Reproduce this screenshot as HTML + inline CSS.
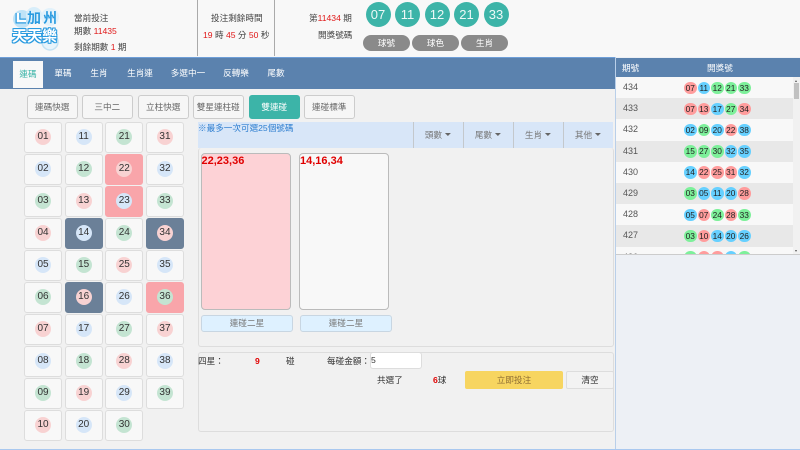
<!DOCTYPE html>
<html lang="zh-Hant"><head><meta charset="utf-8"><title>加州天天樂</title>
<style>
*{box-sizing:border-box;margin:0;padding:0}
html,body{width:800px;height:450px;overflow:hidden;background:#f1f1f1}
body{position:relative;font:8.6px/12px "Liberation Sans","Noto Sans CJK TC",sans-serif;color:#444}
.a{position:absolute;white-space:nowrap}
.red{color:#e01818}
.hdr{left:0;top:0;width:800px;height:57px;background:#f8f8f8}
.v{width:1px;height:56px;top:0;background:#aaa}
.b{width:25px;height:25px;top:1.5px;border-radius:50%;background:#3cb4a8;color:#eef9f7;font-size:13px;line-height:25px;text-align:center}
.p{top:35px;height:16px;width:47px;border-radius:8px;background:#8a8a8a;color:#fff;line-height:16px;text-align:center}
.nav{left:0;top:57px;width:615px;height:32px;background:#5b82ae;border-top:1px solid #6f9fd8}
.n{top:67px;color:#fff;transform:translateX(-50%)}
.btn{top:95px;height:24px;width:50.5px;border:1px solid #ccc;border-radius:3px;background:#f6f6f6;color:#666;text-align:center;line-height:22px}
#g{position:absolute;left:24px;top:121.5px;display:grid;grid-auto-flow:column;grid-template-rows:repeat(10,31px);grid-template-columns:repeat(4,38px);gap:1px 2.67px}
#g div{border:1px solid #ddd;border-radius:3px;background:#f8f8f8;display:flex;align-items:center;justify-content:center}
#g span{width:16px;height:16px;border-radius:50%;font-size:10px;line-height:16px;text-align:center;color:#333}
#g .s{background:#f9a5aa;border-color:#f9a5aa}
#g .d{background:#6b8098;border-color:#6b8098}
.r{background:#f8d2d2}.l{background:#d6e6f8}.g{background:#c4e4d2}
.strip{left:198px;top:121.5px;width:415px;height:26px;background:#d8e6f8}
.sep{top:121.5px;width:1px;height:26px;background:#c4c8cc}
.tb{top:128.5px;color:#777;transform:translateX(-50%)}
.tb:after{content:"";display:inline-block;margin-left:3px;border:3px solid transparent;border-top:3px solid #666;border-bottom:0;vertical-align:2px}
.panel{border:1px solid #ddd;border-radius:3px}
.card{top:153px;width:90px;height:157px;border:1px solid #bbb;border-radius:4px;padding:0;font:bold 11px/14px "Liberation Sans",sans-serif;color:#e00000}
.cb{top:315px;width:92px;height:17px;background:#def1ff;border:1px solid #c8d6e2;border-radius:3px;text-align:center;color:#777;line-height:15px}
.side{left:615px;top:57px;width:185px;height:393px;background:#edf0f5;border-left:1px solid #b9cfe9}
.sh{left:616px;top:58px;width:184px;height:19px;background:#5b82ae;color:#fff;line-height:20px}
.list{left:616px;top:77px;width:184px;height:178px;overflow:hidden;background:#f8f8f8;border-bottom:1px solid #ccc}
.row{height:21.2px;position:relative;line-height:21px;padding-left:7px;color:#555;font-size:9px}
.row:nth-child(even){background:#e8e8e8}
.row b{position:absolute;top:4.5px;width:12.5px;height:12.5px;border-radius:50%;font:8.3px/12.5px "Liberation Sans",sans-serif;text-align:center;color:#222}
.row b:nth-of-type(1){left:68px}.row b:nth-of-type(2){left:81.5px}.row b:nth-of-type(3){left:95px}.row b:nth-of-type(4){left:108.5px}.row b:nth-of-type(5){left:122px}
.x{background:#ff9c9c}.y{background:#66d0ff}.z{background:#7df09a}
.logo{font:bold 15px/15px "Liberation Sans","Noto Sans CJK TC",sans-serif;color:#fff;text-shadow:-1px 0 #2a9be0,1px 0 #2a9be0,0 -1px #2a9be0,0 1px #2a9be0,1px 1px #2a9be0,-1px -1px #2a9be0,1px -1px #2a9be0,-1px 1px #2a9be0}
</style></head><body>
<div class="a hdr"></div>
<svg class="a" style="left:8px;top:3px" width="54" height="52" viewBox="0 0 54 52"><circle cx="14" cy="16" r="9" fill="#bfe3f7"/><circle cx="26" cy="12" r="8" fill="#d8eefa"/><circle cx="42" cy="14" r="9" fill="#e2f2fb"/><circle cx="42" cy="39" r="8" fill="#e8f4fb" stroke="#c4e2f3" stroke-width="1.5"/><path d="M10 10v8h8" fill="none" stroke="#2a9be0" stroke-width="5"/><path d="M10 10v8h8" fill="none" stroke="#fff" stroke-width="2.5"/></svg>
<div class="a" style="left:27px;top:11px;font:bold 14px/15px 'Liberation Sans','Noto Sans CJK TC',sans-serif;letter-spacing:2px;color:#2a9be0;text-shadow:0 0 1px #fff">加州</div>
<div class="a logo" style="left:12px;top:29px">天天樂</div>
<div class="a" style="left:74px;top:12px">當前投注</div>
<div class="a" style="left:74px;top:25px">期數 <span class="red">11435</span></div>
<div class="a" style="left:74px;top:41px">剩餘期數 <span class="red">1</span> 期</div>
<div class="a v" style="left:197px"></div><div class="a v" style="left:274px"></div>
<div class="a" style="left:211px;top:12px">投注剩餘時間</div>
<div class="a" style="left:203px;top:29px"><span class="red">19</span> 時 <span class="red">45</span> 分 <span class="red">50</span> 秒</div>
<div class="a" style="left:309px;top:12px">第<span class="red">11434</span> 期</div>
<div class="a" style="left:318px;top:29px">開獎號碼</div>
<div class="a b" style="left:365.5px">07</div><div class="a b" style="left:395px">11</div><div class="a b" style="left:424.5px">12</div><div class="a b" style="left:454px">21</div><div class="a b" style="left:483.5px">33</div>
<div class="a p" style="left:363px">球號</div><div class="a p" style="left:412px">球色</div><div class="a p" style="left:461px">生肖</div>

<div class="a nav"></div>
<div class="a" style="left:13px;top:61px;width:30px;height:27px;background:#f8f8f8;color:#3cb4a8;text-align:center;line-height:27px">連碼</div>
<div class="a n" style="left:63px">單碼</div><div class="a n" style="left:99px">生肖</div><div class="a n" style="left:140px">生肖連</div><div class="a n" style="left:188px">多選中一</div><div class="a n" style="left:236px">反轉樂</div><div class="a n" style="left:276px">尾數</div>

<div class="a btn" style="left:27px">連碼快選</div><div class="a btn" style="left:82px">三中二</div><div class="a btn" style="left:138px">立柱快選</div><div class="a btn" style="left:193px">雙星連柱碰</div><div class="a btn" style="left:249px;background:#3cb4a8;border-color:#3cb4a8;color:#fff">雙連碰</div><div class="a btn" style="left:304px">連碰標準</div>

<div id="g">
<div><span class="r">01</span></div><div><span class="l">02</span></div><div><span class="g">03</span></div><div><span class="r">04</span></div><div><span class="l">05</span></div><div><span class="g">06</span></div><div><span class="r">07</span></div><div><span class="l">08</span></div><div><span class="g">09</span></div><div><span class="r">10</span></div>
<div><span class="l">11</span></div><div><span class="g">12</span></div><div><span class="r">13</span></div><div class="d"><span class="l">14</span></div><div><span class="g">15</span></div><div class="d"><span class="r">16</span></div><div><span class="l">17</span></div><div><span class="g">18</span></div><div><span class="r">19</span></div><div><span class="l">20</span></div>
<div><span class="g">21</span></div><div class="s"><span class="r">22</span></div><div class="s"><span class="l">23</span></div><div><span class="g">24</span></div><div><span class="r">25</span></div><div><span class="l">26</span></div><div><span class="g">27</span></div><div><span class="r">28</span></div><div><span class="l">29</span></div><div><span class="g">30</span></div>
<div><span class="r">31</span></div><div><span class="l">32</span></div><div><span class="g">33</span></div><div class="d"><span class="r">34</span></div><div><span class="l">35</span></div><div class="s"><span class="g">36</span></div><div><span class="r">37</span></div><div><span class="l">38</span></div><div><span class="g">39</span></div>
</div>

<div class="a strip"></div>
<div class="a" style="left:198px;top:122px;color:#2f7fd0">※最多一次可選25個號碼</div>
<div class="a sep" style="left:413px"></div><div class="a sep" style="left:463px"></div><div class="a sep" style="left:513px"></div><div class="a sep" style="left:563px"></div>
<div class="a tb" style="left:438px">頭數</div><div class="a tb" style="left:488px">尾數</div><div class="a tb" style="left:538px">生肖</div><div class="a tb" style="left:588px">其他</div>

<div class="a panel" style="left:198px;top:148px;width:416px;height:199px;border-top:0"></div>
<div class="a card" style="left:200.5px;background:#fdd2d6">22,23,36</div>
<div class="a card" style="left:299px;background:#f8f8f8">14,16,34</div>
<div class="a cb" style="left:201px">連碰二星</div><div class="a cb" style="left:300px">連碰二星</div>

<div class="a panel" style="left:198px;top:352px;width:416px;height:80px"></div>
<div class="a" style="left:198px;top:355px;color:#333">四星：</div>
<div class="a" style="left:255px;top:355px;color:#e00000;font-weight:bold">9</div>
<div class="a" style="left:286px;top:355px;color:#333">碰</div>
<div class="a" style="left:327px;top:355px;color:#333">每碰金額：</div>
<div class="a" style="left:370px;top:352px;width:52px;height:17px;background:#fff;border:1px solid #ddd;border-radius:3px;line-height:15px;color:#333">5</div>
<div class="a" style="left:377px;top:374px;color:#333">共選了</div>
<div class="a" style="left:433px;top:374px;color:#333"><span style="color:#e00000;font-weight:bold">6</span>球</div>
<div class="a" style="left:465px;top:371px;width:98px;height:18px;background:#f7d560;border-radius:2px;text-align:center;line-height:18px;color:#8f6f35">立即投注</div>
<div class="a" style="left:566px;top:371px;width:48px;height:18px;background:#f3f3f3;border:1px solid #ddd;border-radius:2px;text-align:center;line-height:16px;color:#333">清空</div>

<div class="a side"></div>
<div class="a sh"><span class="a" style="left:6px;top:0">期號</span><span class="a" style="left:91px;top:0">開獎號</span></div>
<div class="a list">
<div class="row">434<b class="x">07</b><b class="y">11</b><b class="z">12</b><b class="z">21</b><b class="z">33</b></div>
<div class="row">433<b class="x">07</b><b class="x">13</b><b class="y">17</b><b class="z">27</b><b class="x">34</b></div>
<div class="row">432<b class="y">02</b><b class="z">09</b><b class="y">20</b><b class="x">22</b><b class="y">38</b></div>
<div class="row">431<b class="z">15</b><b class="z">27</b><b class="z">30</b><b class="y">32</b><b class="y">35</b></div>
<div class="row">430<b class="y">14</b><b class="x">22</b><b class="x">25</b><b class="x">31</b><b class="y">32</b></div>
<div class="row">429<b class="z">03</b><b class="y">05</b><b class="y">11</b><b class="y">20</b><b class="x">28</b></div>
<div class="row">428<b class="y">05</b><b class="x">07</b><b class="z">24</b><b class="x">28</b><b class="z">33</b></div>
<div class="row">427<b class="z">03</b><b class="x">10</b><b class="y">14</b><b class="y">20</b><b class="y">26</b></div>
<div class="row">426<b class="z">15</b><b class="x">31</b><b class="x">34</b><b class="y">35</b><b class="z">36</b></div>
</div>
<div class="a" style="left:793px;top:77px;width:7px;height:177px;background:#f1f1f1"></div>
<div class="a" style="left:794px;top:83px;width:4.5px;height:16px;background:#c1c1c1"></div>
<div class="a" style="left:795px;top:80px;border:1.5px solid transparent;border-bottom:2px solid #555;border-top:0"></div>
<div class="a" style="left:795px;top:250px;border:1.5px solid transparent;border-top:2px solid #555;border-bottom:0"></div>
<div class="a" style="left:0;top:449px;width:800px;height:1px;background:#a9c8ef"></div>
</body></html>
